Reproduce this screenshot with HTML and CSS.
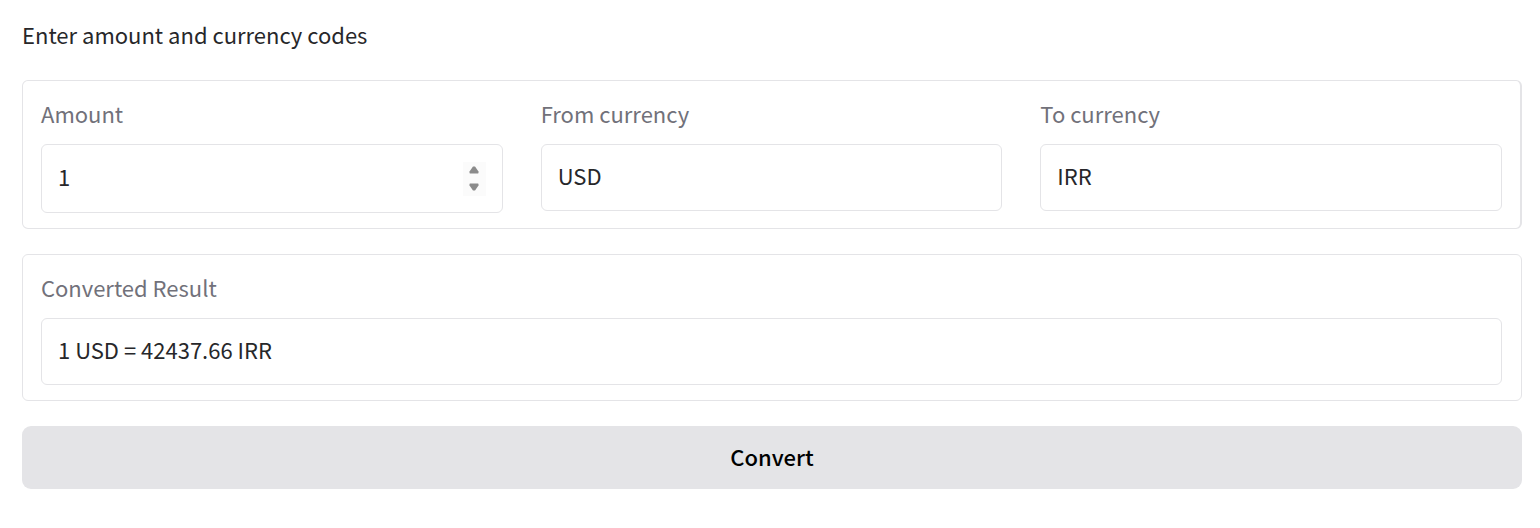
FILE: index.html
```html
<!DOCTYPE html>
<html lang="en">
<head>
<meta charset="utf-8">
<meta name="viewport" content="width=device-width, initial-scale=1">
<title>Currency converter</title>
<link rel="stylesheet" href="styles.css">
</head>
<body>
<form class="converter">
  <p class="intro">Enter amount and currency codes</p>
  <div class="panel panel-inputs">
    <div class="field">
      <label class="label" for="amount">Amount</label>
      <div class="control control-number">
        <input class="input" id="amount" type="number" value="1">
        <div class="stepper">
          <button class="step" type="button" aria-label="Increase amount">
            <svg class="arrow" viewBox="0 0 10 8" aria-hidden="true"><path d="M4 .5h2L9.5 5.5V7L9 7.5H1L.5 7V5.5z"/></svg>
          </button>
          <button class="step" type="button" aria-label="Decrease amount">
            <svg class="arrow" viewBox="0 0 10 8" aria-hidden="true"><path d="M4 7.5h2L9.500 2.500V1L9 .5H1L.5 1V2.500z"/></svg>
          </button>
        </div>
      </div>
    </div>
    <div class="field">
      <label class="label" for="from">From currency</label>
      <div class="control"><input class="input" id="from" type="text" value="USD"></div>
    </div>
    <div class="field">
      <label class="label" for="to">To currency</label>
      <div class="control"><input class="input" id="to" type="text" value="IRR"></div>
    </div>
  </div>
  <div class="panel">
    <div class="field">
      <label class="label" for="result">Converted Result</label>
      <div class="control"><input class="input" id="result" type="text" value="1 USD = 42437.66 IRR" readonly></div>
    </div>
  </div>
  <button class="convert" type="button">Convert</button>
</form>
</body>
</html>
```
FILE: styles.css
```css
* {
  box-sizing: border-box;
}

body {
  margin: 0;
  background: #fff;
  color: #27272a;
  font-family: "Source Sans Pro", "Noto Sans CJK SC", "Noto Sans", sans-serif;
  font-size: 22px;
  line-height: 34px;
}

.converter {
  display: flex;
  flex-direction: column;
  gap: 25px;
  padding: 17px 18px 39px 22px;
}

.intro {
  margin: 0 0 4px;
}

.panel {
  padding: 15px 19px 15px 18px;
  border: 1px solid #e4e4e7;
  border-radius: 6px;
}

.panel-inputs {
  display: grid;
  grid-template-columns: repeat(3, minmax(0, 1fr));
  align-items: start;
  gap: 38px;
  padding-right: 18px;
  border-right-width: 2px;
}

.field {
  display: flex;
  flex-direction: column;
  gap: 14px;
}

.label {
  color: #71717a;
}

.control {
  display: flex;
  align-items: center;
  height: 67px;
  border: 1px solid #e4e4e7;
  border-radius: 6px;
}

.control-number {
  height: 69px;
  padding-right: 16px;
}

.input {
  flex: 1;
  min-width: 0;
  height: 100%;
  padding: 0 16px 5px;
  border: 0;
  background: none;
  color: inherit;
  font: inherit;
  outline: none;
}

.input[type="number"] {
  appearance: textfield;
  -moz-appearance: textfield;
}

.input::-webkit-inner-spin-button {
  appearance: none;
  margin: 0;
}

.stepper {
  display: flex;
  flex-direction: column;
  width: 23px;
  background: #fbfbfb;
}

.step {
  display: flex;
  align-items: center;
  justify-content: center;
  height: 17px;
  padding: 0;
  border: 0;
  background: none;
}

.arrow {
  width: 10px;
  height: 8px;
  fill: #8b8b8b;
}

.convert {
  height: 63px;
  padding: 0 24px 4px;
  border: 0;
  border-radius: 9px;
  background: #e4e4e7;
  color: #000;
  font: inherit;
  font-weight: 500;
}
```
